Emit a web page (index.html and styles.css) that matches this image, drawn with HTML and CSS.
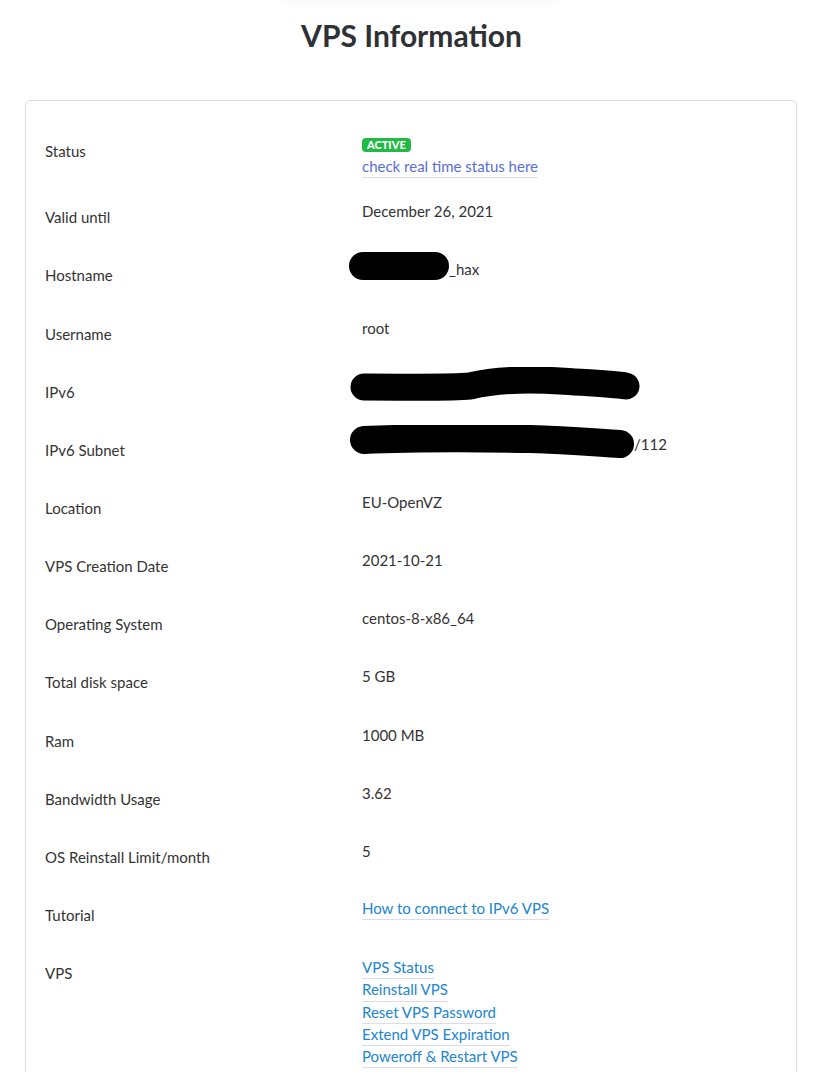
FILE: index.html
```html
<!DOCTYPE html>
<html>
<head>
<meta charset="utf-8">
<link rel="stylesheet" href="styles.css">
</head>
<body>
<div class="topbar"></div>
<h1 class="title">VPS Information</h1>
<div class="card">
  <div class="row status-row">
    <div class="label">Status</div>
    <div class="value">
      <span class="badge">ACTIVE</span>
      <a class="link visited" href="#">check real time status here</a>
    </div>
  </div>
  <div class="row"><div class="label">Valid until</div><div class="value">December 26, 2021</div></div>
  <div class="row"><div class="label">Hostname</div><div class="value"><span class="redact r-host"></span>_hax</div></div>
  <div class="row"><div class="label">Username</div><div class="value">root</div></div>
  <div class="row"><div class="label">IPv6</div><div class="value"><svg class="scribble" width="292" height="34" viewBox="0 0 292 34"><path d="M14 20 C60 20 100 21 120 19 C150 12 180 12 210 14 C240 16 262 17 276 19" stroke="#000" stroke-width="27" stroke-linecap="round" fill="none"/></svg></div></div>
  <div class="row"><div class="label">IPv6 Subnet</div><div class="value"><svg class="scribble" width="284" height="34" viewBox="0 0 284 34"><path d="M14 15 C60 13 120 13 180 14 C220 15 250 18 270 19" stroke="#000" stroke-width="28" stroke-linecap="round" fill="none"/></svg>/112</div></div>
  <div class="row"><div class="label">Location</div><div class="value">EU-OpenVZ</div></div>
  <div class="row"><div class="label">VPS Creation Date</div><div class="value">2021-10-21</div></div>
  <div class="row"><div class="label">Operating System</div><div class="value">centos-8-x86_64</div></div>
  <div class="row"><div class="label">Total disk space</div><div class="value">5 GB</div></div>
  <div class="row"><div class="label">Ram</div><div class="value">1000 MB</div></div>
  <div class="row"><div class="label">Bandwidth Usage</div><div class="value">3.62</div></div>
  <div class="row"><div class="label">OS Reinstall Limit/month</div><div class="value">5</div></div>
  <div class="row"><div class="label">Tutorial</div><div class="value"><a class="link" href="#">How to connect to IPv6 VPS</a></div></div>
  <div class="row"><div class="label">VPS</div><div class="value">
    <a class="link" href="#">VPS Status</a>
    <a class="link" href="#">Reinstall VPS</a>
    <a class="link" href="#">Reset VPS Password</a>
    <a class="link" href="#">Extend VPS Expiration</a>
    <a class="link" href="#">Poweroff &amp; Restart VPS</a>
  </div></div>
</div>
</body>
</html>
```

FILE: styles.css
```css
html, body {
  margin: 0;
  padding: 0;
  background: #fff;
}
body {
  font-family: Lato, "Open Sans", sans-serif;
  color: #333;
  font-size: 15px;
  line-height: 22px;
  position: relative;
  overflow: hidden;
}
.topbar {
  position: absolute;
  left: 282px;
  top: -40px;
  width: 276px;
  height: 40px;
  background: #fff;
  box-shadow: 0 0 10px rgba(0,0,0,0.06);
}
.title {
  margin: 0;
  padding-top: 15px;
  height: 84px;
  box-sizing: border-box;
  text-align: center;
  font-size: 30px;
  line-height: 40px;
  font-weight: 700;
  color: #2f3235;
  padding-left: 2px;
}
.card {
  margin: 16px 24px 0 25px;
  border: 1px solid #ddd;
  border-radius: 5px;
  padding: 21px 0 0 19px;
}
.row {
  display: grid;
  grid-template-columns: 317px 1fr;
}
.label {
  padding: 18px 0 18.15px;
}
.value {
  padding: 12px 0 10px 0;
  display: flex;
  flex-direction: column;
  align-items: flex-start;
}
.row:last-child .value { padding-top: 13px; }
.badge {
  display: inline-block;
  background: #21ba45;
  color: #fff;
  font-size: 11px;
  font-weight: 900;
  line-height: 14px;
  padding: 0 5px;
  border-radius: 4px;
  margin: 4px 0 4px;
}
.link {
  color: #2185d0;
  text-decoration: none;
  border-bottom: 1px solid #dcdde6;
  line-height: 21.25px;
}
.link.visited { color: #5a6fd6; }
.redact {
  display: inline-block;
  width: 100px;
  height: 28px;
  border-radius: 14px;
  background: #000;
  margin: -6px 0 0 -13px;
  vertical-align: top;
}
.value:has(.redact) { flex-direction: row; align-items: flex-start; }
.scribble {
  display: block;
  margin: -8px 0 -4px -12px;
}
.value:has(.scribble) { flex-direction: row; align-items: flex-start; }
```
